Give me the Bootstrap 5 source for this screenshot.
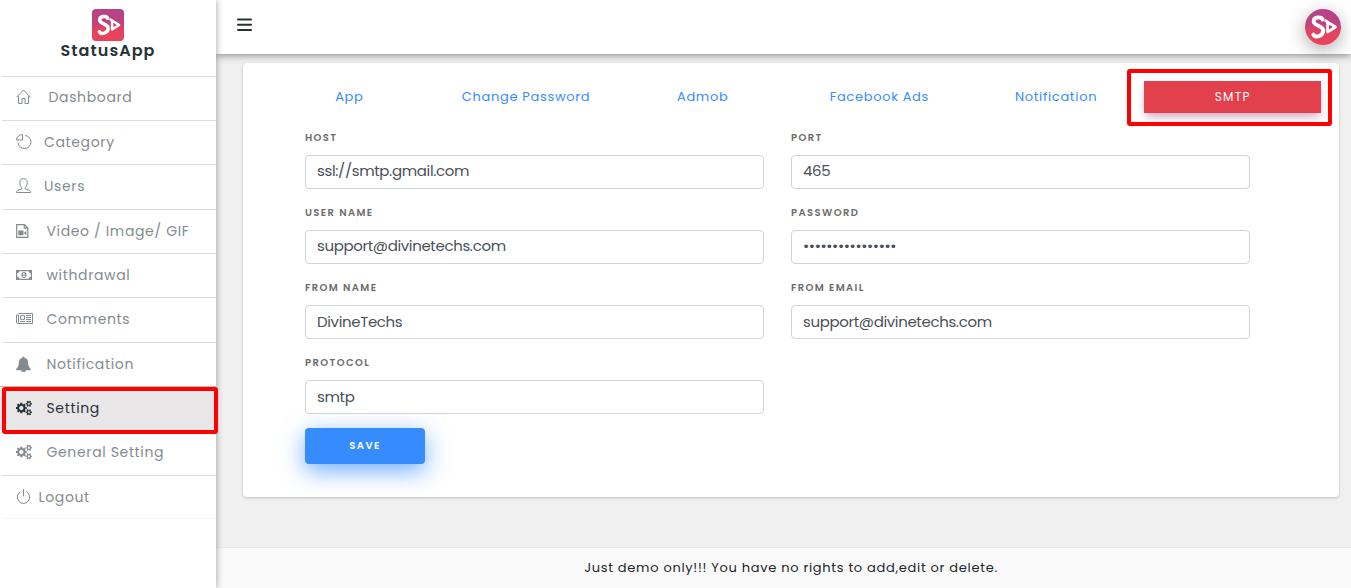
<!DOCTYPE html>
<html lang="en">
<head>
<meta charset="utf-8">
<meta name="viewport" content="width=device-width, initial-scale=1">
<title>StatusApp - Setting</title>
<link href="https://cdn.jsdelivr.net/npm/bootstrap@5.3.0/dist/css/bootstrap.min.css" rel="stylesheet">
<style>
body{font-family:Poppins,Inter,"Open Sans",sans-serif;background:#f0f0f0;color:#263238;font-size:13px;overflow:hidden}
.sidebar{width:216px;background:#fff;box-shadow:0 0 7px rgba(0,0,0,.38);z-index:3;flex:none}
.brand{height:75.9px;padding-top:9px}
.brand svg{border-radius:4px}
.brand-name{font-size:16px;font-weight:600;letter-spacing:1.05px;line-height:19px;color:#263238}
.side-link{height:44.3px;border-top:1px solid #dcdadb;margin-left:2px;padding:0 0 1px 14px;color:#848b8f;font-size:14px;letter-spacing:.64px;white-space:nowrap;text-decoration:none}
.side-link svg{flex:none;width:16px;height:16px;margin:-1px 15px 0 -.5px}
.side-link.g-wide{padding-bottom:2.500px}
.side-link.g-wide svg{margin-right:17px}
.side-link.g-mid svg{margin-right:12.500px}
.side-link.g-thin svg{margin-right:7px}
.side-link.g-low{padding-bottom:0}
.side-link.current{background:#e8e6e7;margin-left:0;padding-left:16px;color:#263238;border-top-color:#b9bcbe}
.side-link.no-line{border-top-color:transparent}
.side-end{border-top:1px solid #f5f4f4;margin:-1px 0 0 2px}
.marker{position:absolute;border:4px solid #fe0000;border-radius:3px;pointer-events:none;z-index:5}
.marker-side{left:2px;top:1px;width:216px;height:47px}
.marker-tab{left:-17px;right:-11px;top:-12px;height:57px}
.topbar{height:54px;background:#fff;box-shadow:0 1px 8px rgba(0,0,0,.46);z-index:1;padding:0 10px 0 20px}
.burger{margin-top:-5px}
.avatar{width:36px;height:36px;border-radius:50%;box-shadow:0 5px 18px rgba(0,0,0,.32)}
.panel{margin:9px 12px 0 27px;height:434px;background:#fff;border-radius:4px;box-shadow:0 1px 3px rgba(0,0,0,.2);padding:18px 18px 0}
.tab-item{height:32px;color:#368cfd;font-size:13px;letter-spacing:.68px;text-decoration:none;position:relative;flex:1 1 0}
.tab-item.current{background:#e2404d;color:#fff;font-size:12px;letter-spacing:1.3px;box-shadow:0 5px 10px -2px rgba(150,40,100,.45)}
.fields{padding:13px 44px 0;display:grid;grid-template-columns:459px 459px;column-gap:27px}
.field-box{height:75px}
.field-box label{display:block;font-size:10px;font-weight:600;letter-spacing:1.4px;line-height:23px;height:29px;color:#6d6c6c;text-transform:uppercase}
.field-box .form-control{height:34px;border:1px solid #ced4da;border-radius:4px;font-size:15px;padding:0 11px 1px;color:#495057;letter-spacing:-.36px}
.field-box.upper .form-control{padding-bottom:3px}
.btn-save{width:120px;height:36px;margin:2px 0 0 44px;padding:0 0 2px;background:#368cfd;color:#fff;font-size:10px;font-weight:600;letter-spacing:1.4px;border:0;border-radius:4px;box-shadow:0 7px 23px rgba(54,140,253,.7)}
.btn-save:hover{background:#368cfd;color:#fff}
.foot{height:41px;background:#f9f9f9;border-top:1px solid #e8e8e8;padding-left:15px;font-size:13px;letter-spacing:.7px;color:#212529}
</style>
</head>
<body>
<svg width="0" height="0" class="position-absolute" aria-hidden="true">
  <defs>
    <linearGradient id="lg" x1="0" y1="0" x2="0" y2="1"><stop offset="0" stop-color="#b5428c"/><stop offset=".4" stop-color="#bd437f"/><stop offset=".65" stop-color="#e4425f"/><stop offset="1" stop-color="#e8435b"/></linearGradient>
    <symbol id="logo" viewBox="0 0 32 32">
      <rect width="32" height="32" fill="url(#lg)"/>
      <path d="M15.700 9.300C14.800 6.800 7.800 6.400 7.700 11c-.1 4.200 8.600 3.600 8.500 8.200-.2 5.400-7.200 6.400-8.800 3.600" fill="none" stroke="#fff" stroke-width="3.500" stroke-linecap="round"/>
      <path d="M20.100 12.300v8.200l7-4.500-8.600-5.500" fill="none" stroke="#fff" stroke-width="2.500" stroke-linejoin="round" stroke-linecap="round"/>
    </symbol>
    <symbol id="cogs" viewBox="0 0 1920 1792"><path fill="currentColor" d="M896 896q0-106-75-181t-181-75-181 75-75 181 75 181 181 75 181-75 75-181zm768 512q0-52-38-90t-90-38-90 38-38 90q0 53 37.500 90.500t90.500 37.500 90.500-37.500 37.500-90.500zm0-1024q0-52-38-90t-90-38-90 38-38 90q0 53 37.500 90.500t90.500 37.500 90.500-37.500 37.500-90.500zm-384 421v185q0 10-7 19.500t-16 10.500l-155 24q-11 35-32 76 34 48 90 115 7 11 7 20 0 12-7 19-23 30-82.500 89.500t-78.500 59.500q-11 0-21-7l-115-90q-37 19-77 31-11 108-23 155-7 24-30 24h-186q-11 0-20-7.500t-10-17.500l-23-153q-34-10-75-31l-118 89q-7 7-20 7-11 0-21-8-144-133-144-160 0-9 7-19 10-14 41-53t47-61q-23-44-35-82l-152-24q-10-1-17-9.500t-7-19.500v-185q0-10 7-19.500t16-10.500l155-24q11-35 32-76-34-48-90-115-7-11-7-20 0-12 7-20 22-30 82-89t79-59q11 0 21 7l115 90q34-18 77-32 11-108 23-154 7-24 30-24h186q11 0 20 7.500t10 17.500l23 153q34 10 75 31l118-89q8-7 20-7 11 0 21 8 144 133 144 160 0 8-7 19-12 16-42 54t-45 60q23 48 34 82l152 23q10 2 17 10.500t7 19.500zm640 533v140q0 16-149 31-12 27-30 52 51 113 51 138 0 4-4 7-122 71-124 71-8 0-46-47t-52-68q-20 2-30 2t-30-2q-14 21-52 68t-46 47q-2 0-124-71-4-3-4-7 0-25 51-138-18-25-30-52-149-15-149-31v-140q0-16 149-31 13-29 30-52-51-113-51-138 0-4 4-7 4-2 35-20t59-34 30-16q8 0 46 46.500t52 67.500q20-2 30-2t30 2q51-71 92-112l6-2q4 0 124 70 4 3 4 7 0 25-51 138 17 23 30 52 149 15 149 31zm0-1024v140q0 16-149 31-12 27-30 52 51 113 51 138 0 4-4 7-122 71-124 71-8 0-46-47t-52-68q-20 2-30 2t-30-2q-14 21-52 68t-46 47q-2 0-124-71-4-3-4-7 0-25 51-138-18-25-30-52-149-15-149-31v-140q0-16 149-31 13-29 30-52-51-113-51-138 0-4 4-7 4-2 35-20t59-34 30-16q8 0 46 46.500t52 67.500q20-2 30-2t30 2q51-71 92-112l6-2q4 0 124 70 4 3 4 7 0 25-51 138 17 23 30 52 149 15 149 31z"/></symbol>
  </defs>
</svg>
<div class="d-flex vh-100">
  <aside class="sidebar position-relative d-flex flex-column">
    <div class="brand text-center d-flex flex-column align-items-center">
      <svg width="32" height="32"><use href="#logo"/></svg>
      <div class="brand-name">StatusApp</div>
    </div>
    <nav class="d-flex flex-column">
      <a class="side-link g-wide d-flex align-items-center" href="#"><svg viewBox="0 0 16 16" fill="none" stroke="currentColor"><path d="M.5 8.300 7.500 1l7 7.300M2.500 6.500v8h3.500V9.500h3v5h3.500v-8"/></svg>Dashboard</a>
      <a class="side-link g-mid d-flex align-items-center" href="#"><svg viewBox="0 0 16 16" fill="none" stroke="currentColor"><path d="M9 1.500a6.500 6.500 0 1 1-7 7M6.500.5v5.500H.5C.7 3 3 .7 6.500.5z"/></svg>Category</a>
      <a class="side-link g-mid d-flex align-items-center" href="#"><svg viewBox="0 0 16 16" fill="none" stroke="currentColor"><path d="M5.800 9.500C4.500 8.300 3.800 6.500 3.800 4.500 3.800 2 5.300.6 7.500.6s3.700 1.400 3.700 3.900c0 2-.7 3.800-2 5v1.300l3.800 1.400c1 .4 1.500 1 1.500 2.300H.5c0-1.300.5-1.900 1.500-2.300l3.800-1.400z"/></svg>Users</a>
      <a class="side-link g-low d-flex align-items-center" href="#"><svg viewBox="0 0 16 16" fill="none" stroke="currentColor"><path d="M.7 1.700h7.800l3.300 3.300v9.300H.7zM8.300 1.900v3.300h3.400" stroke-width="1.200"/><path d="M2.300 7.500h5.200v4.800H2.300zM7.800 10l2.500-2.300v4.600z" fill="currentColor" stroke="none"/></svg>Video / Image/ GIF</a>
      <a class="side-link d-flex align-items-center" href="#"><svg viewBox="0 0 16 16"><path fill="currentColor" fill-rule="evenodd" d="M0 3h16v10H0zM3.200 4.200A2 2 0 0 1 1.200 6.200v3.600a2 2 0 0 1 2 2h9.600a2 2 0 0 1 2-2V6.200a2 2 0 0 1-2-2zM8 5c1.700 0 2.600 1.400 2.600 3S9.700 11 8 11s-2.600-1.400-2.600-3S6.300 5 8 5zm-.2 1L6.600 7l.5.600.4-.3v1.900h-.8v.8h2.500v-.8h-.7V6z"/></svg>withdrawal</a>
      <a class="side-link d-flex align-items-center" href="#"><svg viewBox="0 0 16 16" fill="none" stroke="currentColor" overflow="visible"><path d="M2.500 2.500h14v10h-15c-.7 0-1-.5-1-1V4h2v7.500c0 .6-.3 1-1 1"/><path d="M4.500 4.700h4v3.600h-4zM10 4.500h5M10 6.500h5M10 8.500h5M4 10.500h5M10 10.500h5"/></svg>Comments</a>
      <a class="side-link g-low d-flex align-items-center" href="#"><svg viewBox="0 0 1792 1792"><path transform="translate(-60 60)" fill="currentColor" d="M912 1696q0-16-16-16-59 0-101.500-42.500t-42.500-101.500q0-16-16-16t-16 16q0 73 51.500 124.500t124.500 51.500q16 0 16-16zm816-288q0 52-38 90t-90 38h-448q0 106-75 181t-181 75-181-75-75-181h-448q-52 0-90-38t-38-90q50-42 91-88t85-119.500 74.500-158.500 50-206 19.500-260q0-152 117-282.500t307-158.500q-8-19-8-39 0-40 28-68t68-28 68 28 28 68q0 20-8 39 190 28 307 158.500t117 282.500q0 139 19.500 260t50 206 74.500 158.500 85 119.500 91 88z"/></svg>Notification</a>
      <div class="position-relative">
        <a class="side-link current d-flex align-items-center" href="#"><svg><use href="#cogs"/></svg>Setting</a>
        <span class="marker marker-side"></span>
      </div>
      <a class="side-link no-line d-flex align-items-center" href="#"><svg><use href="#cogs"/></svg>General Setting</a>
      <a class="side-link g-thin g-low d-flex align-items-center" href="#"><svg viewBox="0 0 16 16" fill="none" stroke="currentColor"><path d="M4.700 2.700a6.200 6.200 0 1 0 5.600 0M7.500.3v7"/></svg>Logout</a>
      <div class="side-end"></div>
    </nav>
  </aside>
  <div class="flex-grow-1 d-flex flex-column">
    <header class="topbar position-relative d-flex align-items-center justify-content-between">
      <svg class="burger" width="17" height="14" stroke="#263238" stroke-width="2" stroke-linecap="round"><path d="M2 1.500h13M2 6.800h13M2 12.100h13"/></svg>
      <svg class="avatar" viewBox="0 0 32 32"><use href="#logo"/></svg>
    </header>
    <main class="panel">
      <nav class="d-flex">
        <a class="tab-item d-flex align-items-center justify-content-center" href="#">App</a>
        <a class="tab-item d-flex align-items-center justify-content-center" href="#">Change Password</a>
        <a class="tab-item d-flex align-items-center justify-content-center" href="#">Admob</a>
        <a class="tab-item d-flex align-items-center justify-content-center" href="#">Facebook Ads</a>
        <a class="tab-item d-flex align-items-center justify-content-center" href="#">Notification</a>
        <a class="tab-item current d-flex align-items-center justify-content-center" href="#">SMTP<span class="marker marker-tab"></span></a>
      </nav>
      <form>
        <div class="fields">
          <div class="field-box upper"><label for="host">Host</label><input id="host" class="form-control" value="ssl://smtp.gmail.com"></div>
          <div class="field-box upper"><label for="port">Port</label><input id="port" class="form-control" value="465"></div>
          <div class="field-box upper"><label for="user">User name</label><input id="user" class="form-control" value="support@divinetechs.com"></div>
          <div class="field-box upper"><label for="pass">Password</label><input id="pass" class="form-control" value="••••••••••••••••"></div>
          <div class="field-box"><label for="from">From name</label><input id="from" class="form-control" value="DivineTechs"></div>
          <div class="field-box"><label for="mail">From email</label><input id="mail" class="form-control" value="support@divinetechs.com"></div>
          <div class="field-box"><label for="proto">Protocol</label><input id="proto" class="form-control" value="smtp"></div>
        </div>
        <button type="button" class="btn btn-save d-block">SAVE</button>
      </form>
    </main>
    <footer class="foot mt-auto d-flex align-items-center justify-content-center">Just demo only!!! You have no rights to add,edit or delete.</footer>
  </div>
</div>
<script src="https://cdn.jsdelivr.net/npm/bootstrap@5.3.0/dist/js/bootstrap.bundle.min.js"></script>
</body>
</html>
